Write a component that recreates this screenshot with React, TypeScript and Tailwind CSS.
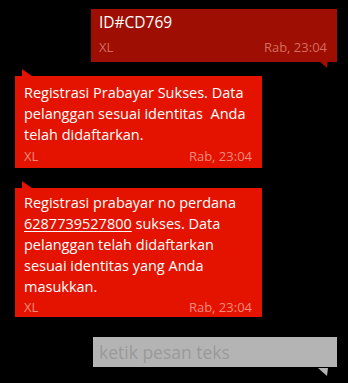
import React from "react";

const font = { fontFamily: "'Open Sans', 'Noto Sans', sans-serif" };

function Meta(props: { tone: string }): React.JSX.Element {
    return (
        <div className={`flex justify-between text-[13px] leading-[20px] ${props.tone}`}>
            <span>XL</span>
            <span>Rab, 23:04</span>
        </div>
    );
}

function TailDown(props: { color: string; className: string }): React.JSX.Element {
    return (
        <svg className={`absolute ${props.className}`} width="10" height="8" viewBox="0 0 10 8">
            <polygon points="0,0 10,0 9,8" fill={props.color}/>
        </svg>
    );
}

function TailUp(): React.JSX.Element {
    return (
        <svg className="absolute left-[7px] top-[-7px]" width="10" height="7" viewBox="0 0 10 7">
            <polygon points="0,0 0,7 10,7" fill="#e31300"/>
        </svg>
    );
}

export default function App(): React.JSX.Element {
    return (
        <div className="w-[348px] h-[383px] bg-black text-white overflow-hidden flex flex-col" style={font}>
            <div className="relative ml-[91px] mt-[9px] w-[246px] h-[53px] bg-[#9f0e02] pl-[8px] pr-[10px] pt-[3px]">
                <div className="text-[15.5px] leading-[21px]">ID#CD769</div>
                <div className="mt-[4px]">
                    <Meta tone="text-[#d26c60]"/>
                </div>
                <TailDown color="#9f0e02" className="right-[9px] bottom-[-6px]"/>
            </div>

            <div className="relative ml-[15px] mt-[14px] w-[247px] h-[92px] bg-[#e31300] pl-[9px] pr-[10px] pt-[6px]">
                <TailUp/>
                <div className="text-[14.5px] leading-[21px] whitespace-nowrap">
                    Registrasi Prabayar Sukses. Data<br/>
                    pelanggan sesuai identitas&nbsp; Anda<br/>
                    telah didaftarkan.
                </div>
                <div className="mt-[1px]">
                    <Meta tone="text-[#f68a7e]"/>
                </div>
            </div>

            <div className="relative ml-[15px] mt-[20px] w-[247px] h-[129px] bg-[#e31300] pl-[9px] pr-[10px] pt-[4px]">
                <TailUp/>
                <div className="text-[14.5px] leading-[21px] whitespace-nowrap">
                    Registrasi prabayar no perdana<br/>
                    <span className="underline underline-offset-2">6287739527800</span> sukses. Data<br/>
                    pelanggan telah didaftarkan<br/>
                    sesuai identitas yang Anda<br/>
                    masukkan.
                </div>
                <div className="mt-0">
                    <Meta tone="text-[#f68a7e]"/>
                </div>
            </div>

            <div className="relative ml-[93px] mt-[20px] w-[244px] h-[30px] bg-[#b4b4b4] pl-[6px] flex items-center">
                <span className="text-[17.5px] text-[#9a9a9a]">ketik pesan teks</span>
                <TailDown color="#b4b4b4" className="right-[9px] bottom-[-9px]"/>
            </div>
        </div>
    );
}
